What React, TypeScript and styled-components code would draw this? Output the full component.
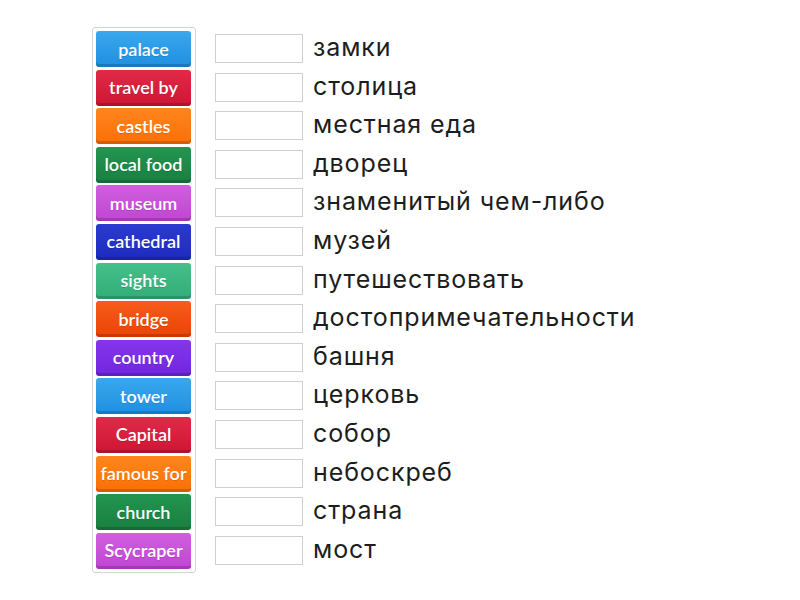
import React from "react";
import styled, { createGlobalStyle } from "styled-components";

const Global = createGlobalStyle`
  html, body { margin: 0; padding: 0; background: #ffffff; }
  body { font-family: "Inter", "Liberation Sans", sans-serif; }
`;

const Page = styled.div`
  display: flex;
  align-items: flex-start;
  padding: 27px 0 0 92px;
  gap: 19px;
`;

const TileBox = styled.div`
  width: 104px;
  box-sizing: border-box;
  border: 1px solid #d4d4d4;
  border-radius: 3px;
  padding: 3px 4px 3px 3px;
  display: flex;
  flex-direction: column;
  gap: 2.6px;
`;

const Tile = styled.div<{ $c: string; $d: string }>`
  height: 36px;
  box-sizing: border-box;
  border-radius: 3px;
  background: linear-gradient(to bottom, ${(p) => p.$c} 0%, ${(p) => p.$d} 100%);
  box-shadow: inset 0 -3px 0 rgba(0, 0, 0, 0.16);
  color: #ffffff;
  font-family: "Lato", "Open Sans", sans-serif;
  font-weight: 600;
  font-size: 18px;
  display: flex;
  align-items: center;
  justify-content: center;
  padding-bottom: 1px;
  white-space: nowrap;
  letter-spacing: 0;
  text-shadow: 0 1px 0 rgba(0, 0, 0, 0.12);
`;

const Answers = styled.div`
  display: flex;
  flex-direction: column;
  padding-top: 7px;
`;

const Row = styled.div`
  height: 38.6px;
  display: flex;
  align-items: flex-start;
  gap: 10px;
`;

const Slot = styled.div`
  width: 88px;
  height: 29px;
  box-sizing: border-box;
  border: 1px solid #cfcfcf;
  background: #ffffff;
`;

const Word = styled.div`
  font-family: "Inter", "Liberation Sans", sans-serif;
  font-size: 25px;
  letter-spacing: 0.9px;
  line-height: 29px;
  color: #1d1d1d;
  white-space: nowrap;
  margin-top: -1px;
`;

const palette: Record<string, [string, string]> = {
  blue: ["#3aa8ee", "#1f8fe0"],
  red: ["#e02a48", "#cc1634"],
  orange: ["#ff861c", "#fb6f06"],
  green: ["#23954f", "#197f41"],
  pink: ["#d05fdf", "#c045d2"],
  navy: ["#2a3bd0", "#1d2abf"],
  teal: ["#45c08a", "#33ad78"],
  vermil: ["#f65c1a", "#ea4405"],
  violet: ["#8536ea", "#7025df"],
};

const tiles: [string, string][] = [
  ["palace", "blue"],
  ["travel by", "red"],
  ["castles", "orange"],
  ["local food", "green"],
  ["museum", "pink"],
  ["cathedral", "navy"],
  ["sights", "teal"],
  ["bridge", "vermil"],
  ["country", "violet"],
  ["tower", "blue"],
  ["Capital", "red"],
  ["famous for", "orange"],
  ["church", "green"],
  ["Scycraper", "pink"],
];

const words = [
  "замки",
  "столица",
  "местная еда",
  "дворец",
  "знаменитый чем-либо",
  "музей",
  "путешествовать",
  "достопримечательности",
  "башня",
  "церковь",
  "собор",
  "небоскреб",
  "страна",
  "мост",
];

export default function App() {
  return (
    <>
      <Global />
      <Page>
        <TileBox>
          {tiles.map(([t, c]) => (
            <Tile key={t} $c={palette[c][0]} $d={palette[c][1]}>
              {t}
            </Tile>
          ))}
        </TileBox>
        <Answers>
          {words.map((w) => (
            <Row key={w}>
              <Slot />
              <Word>{w}</Word>
            </Row>
          ))}
        </Answers>
      </Page>
    </>
  );
}
